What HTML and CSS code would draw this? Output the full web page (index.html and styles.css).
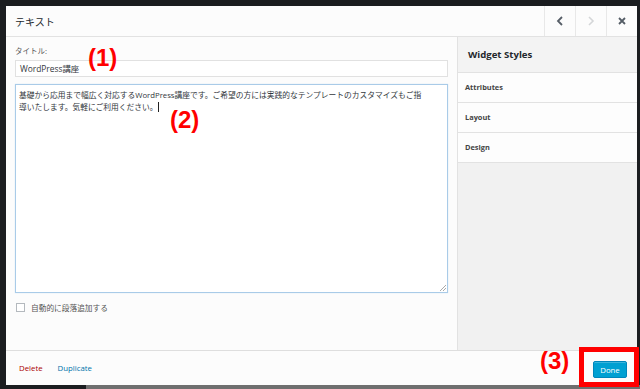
FILE: index.html
```html
<!DOCTYPE html>
<html lang="ja">
<head>
  <meta charset="UTF-8"/>
  <title>テキスト - Widget</title>
  <link rel="stylesheet" href="styles.css">
</head>
<body>

  <div class="adminbar"></div>

  <div class="stage">
    <div class="gutter"></div>

    <div class="modal">
      <div class="modal-head">
        <h1>テキスト</h1>
        <div class="nav">
          <span class="nav-btn">
            <svg width="8" height="10" viewBox="0 0 8 10"><path d="M6 1 L2 5 L6 9" fill="none" stroke="#555d66" stroke-width="1.8"/></svg>
          </span>
          <span class="nav-btn">
            <svg width="8" height="10" viewBox="0 0 8 10"><path d="M2 1 L6 5 L2 9" fill="none" stroke="#d4d6d8" stroke-width="1.6"/></svg>
          </span>
          <span class="nav-btn">
            <svg width="8" height="8" viewBox="0 0 8 8"><path d="M1 1 L7 7 M7 1 L1 7" fill="none" stroke="#555d66" stroke-width="1.8"/></svg>
          </span>
        </div>
      </div>

      <div class="modal-body">
        <div class="form">
          <label class="field-label">タイトル:</label>
          <div class="input">WordPress講座</div>
          <div class="editor">
            <div>基礎から応用まで幅広く対応するWordPress講座です。ご希望の方には実践的なテンプレートのカスタマイズもご指</div>
            <div>導いたします。気軽にご利用ください。<span class="caret"></span></div>
            <svg class="grip" width="6" height="6" viewBox="0 0 6 6"><path d="M0 6 L6 0 M3 6 L6 3" stroke="#aaa" stroke-width="1"/></svg>
          </div>
          <div class="check-row">
            <span class="checkbox"></span>
            <span>自動的に段落追加する</span>
          </div>
        </div>

        <div class="sidebar">
          <h2>Widget Styles</h2>
          <div class="section">Attributes</div>
          <div class="section">Layout</div>
          <div class="section">Design</div>
        </div>
      </div>

      <div class="modal-foot">
        <a class="link-delete">Delete</a>
        <a class="link-dup">Duplicate</a>
        <span class="spacer"></span>
        <button class="done">Done</button>
      </div>

      <!-- annotation marks drawn over the screenshot -->
      <span class="note note-1">(1)</span>
      <span class="note note-2">(2)</span>
      <span class="note note-3">(3)</span>
      <span class="note-box"></span>
    </div>

    <div class="gutter-right"></div>
  </div>

  <div class="under">
    <div class="under-dark"></div>
    <div class="under-page"></div>
  </div>

</body>
</html>
```

FILE: styles.css
```css
body {
  margin: 0;
  background-color: #1e2124;
  font-family: "Open Sans", "Noto Sans CJK JP", sans-serif;
  color: #444;
  overflow: hidden;
}

.adminbar {
  height: 6px;
  background-color: #1a1c1f;
}

.stage {
  display: flex;
  height: 379px;
}

.gutter {
  width: 6px;
  background-color: #1b1d20;
}

.gutter-right {
  flex: 1;
  background-color: #1b1d20;
}

.modal {
  position: relative;
  width: 631px;
  display: flex;
  flex-direction: column;
  background-color: #fcfcfc;
}

.modal-head {
  height: 30px;
  display: flex;
  align-items: center;
  border-bottom: 1px solid #e2e2e2;
  background-color: #fcfcfc;
}

.modal-head h1 {
  flex: 1;
  margin: 0 0 0 9px;
  font-size: 10px;
  font-weight: normal;
  color: #23282d;
}

.nav {
  display: flex;
  height: 100%;
}

.nav-btn {
  width: 30px;
  display: flex;
  align-items: center;
  justify-content: center;
  border-left: 1px solid #e8e8e8;
}

.modal-body {
  flex: 1;
  display: flex;
  min-height: 0;
}

.form {
  flex: 1;
  padding: 9px 9px 0 9px;
}

.field-label {
  display: block;
  font-size: 7.5px;
  line-height: 10px;
  color: #555;
  margin-bottom: 4px;
}

.input {
  height: 15px;
  border: 1px solid #e1e1e1;
  background: #fff;
  padding: 0 4px;
  font-size: 8.4px;
  line-height: 15px;
  color: #32373c;
  margin-bottom: 7px;
}

.editor {
  position: relative;
  height: 199px;
  border: 1px solid #a9cbe8;
  box-shadow: 0 0 1px #c8dff2;
  background: #fff;
  padding: 4px 3px;
  font-size: 7.75px;
  line-height: 12px;
  color: #32373c;
  white-space: nowrap;
}

.caret {
  display: inline-block;
  width: 0;
  height: 10px;
  border-left: 1px solid #222;
  vertical-align: -2px;
}

.grip {
  position: absolute;
  right: 1px;
  bottom: 1px;
}

.check-row {
  display: flex;
  align-items: center;
  gap: 6px;
  margin: 9px 0 0 1px;
  font-size: 7.7px;
  color: #555;
}

.checkbox {
  width: 7px;
  height: 7px;
  border: 1px solid #b4b9be;
  background: #fff;
}

.sidebar {
  width: 179px;
  background-color: #f1f1f1;
  border-left: 1px solid #e2e2e2;
}

.sidebar h2 {
  margin: 0;
  height: 35px;
  line-height: 35px;
  padding-left: 10px;
  font-size: 9.6px;
  font-weight: 700;
  color: #23282d;
  background-color: #f3f3f3;
  border-bottom: 1px solid #e2e2e2;
}

.section {
  height: 29px;
  line-height: 29px;
  padding-left: 7px;
  font-size: 7.4px;
  font-weight: 700;
  color: #444;
  background-color: #fdfdfd;
  border-bottom: 1px solid #e2e2e2;
}

.modal-foot {
  height: 34px;
  display: flex;
  align-items: center;
  border-top: 1px solid #dedede;
  padding: 0 10px 0 13px;
  font-size: 7.8px;
}

.link-delete {
  color: #a00;
  margin-right: 15px;
}

.link-dup {
  color: #0073aa;
}

.spacer {
  flex: 1;
}

.done {
  width: 34px;
  height: 17px;
  margin-top: 3px;
  padding: 0;
  border: 1px solid #0086bb;
  border-radius: 2px;
  background-color: #00a0d2;
  color: #fff;
  font-family: "Open Sans", sans-serif;
  font-size: 7.8px;
  box-shadow: inset 0 1px 0 rgba(120,200,230,0.5);
}

.note {
  position: absolute;
  font-family: "Liberation Sans", Arial, sans-serif;
  font-weight: 700;
  font-size: 24px;
  line-height: 24px;
  color: #ff0000;
}

.note-1 { left: 82px; top: 40px; }
.note-2 { left: 164px; top: 102px; }
.note-3 { left: 534px; top: 343px; }

.note-box {
  position: absolute;
  left: 573px;
  top: 341px;
  width: 50px;
  height: 30px;
  border: 5px solid #ff0000;
}

.under {
  display: flex;
  height: 4px;
}

.under-dark {
  width: 86px;
  background-color: #1b1d20;
}

.under-page {
  flex: 1;
  background-color: #6f6f6f;
}
```
